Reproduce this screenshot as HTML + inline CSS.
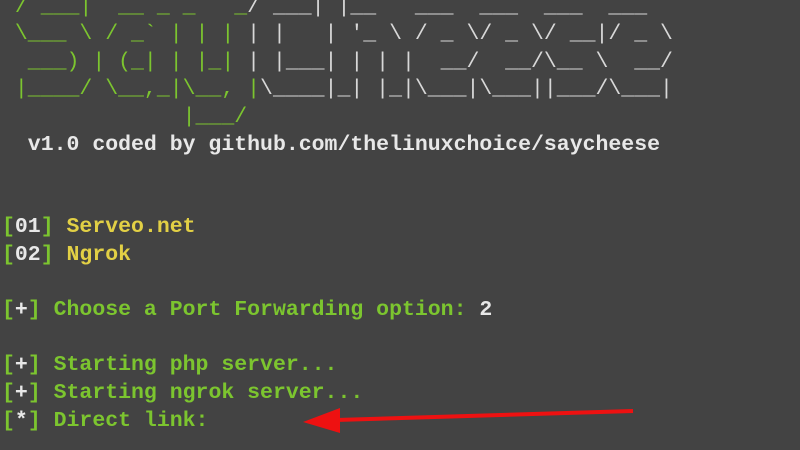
<!DOCTYPE html>
<html><head><style>
html,body{margin:0;width:800px;height:450px;overflow:hidden;background:#434343}
pre{position:absolute;left:2px;top:-34px;margin:0;font-family:"Liberation Mono",monospace;font-weight:bold;font-size:21.5px;line-height:27.6px;color:#7cc52f;white-space:pre}
.w{color:#e8e8e8}.y{color:#e2d045}.s{color:#7cc52f}.c{color:#d8d8d8;font-weight:normal}.a{font-weight:normal}
</style></head><body>
<pre><span class="a">  ____             </span><span class="c"> ____ _                          </span>
<span class="a"> / ___|  __ _ _   _</span><span class="c">/ ___| |__   ___  ___  ___  ___ </span>
<span class="a"> \___ \ / _` | | | </span><span class="c">| |   | '_ \ / _ \/ _ \/ __|/ _ \</span>
<span class="a">  ___) | (_| | |_| </span><span class="c">| |___| | | |  __/  __/\__ \  __/</span>
<span class="a"> |____/ \__,_|\__, |</span><span class="c">\____|_| |_|\___|\___||___/\___|</span>
<span class="a">              |___/</span>
<span class="w">  v1.0 coded by github.com/thelinuxchoice/saycheese</span>


[<span class="w">01</span>] <span class="y">Serveo.net</span>
[<span class="w">02</span>] <span class="y">Ngrok</span>

[<span class="w">+</span>] Choose a Port Forwarding option: <span class="w">2</span>

[<span class="w">+</span>] Starting php server...
[<span class="w">+</span>] Starting ngrok server...
[<span class="w">*</span>] Direct link:</pre>
<svg width="800" height="450" style="position:absolute;left:0;top:0">
<line x1="336" y1="420" x2="633" y2="411" stroke="#ee1111" stroke-width="4"/>
<polygon points="303,422 340,408 340,433" fill="#ee1111"/>
</svg>
</body></html>
